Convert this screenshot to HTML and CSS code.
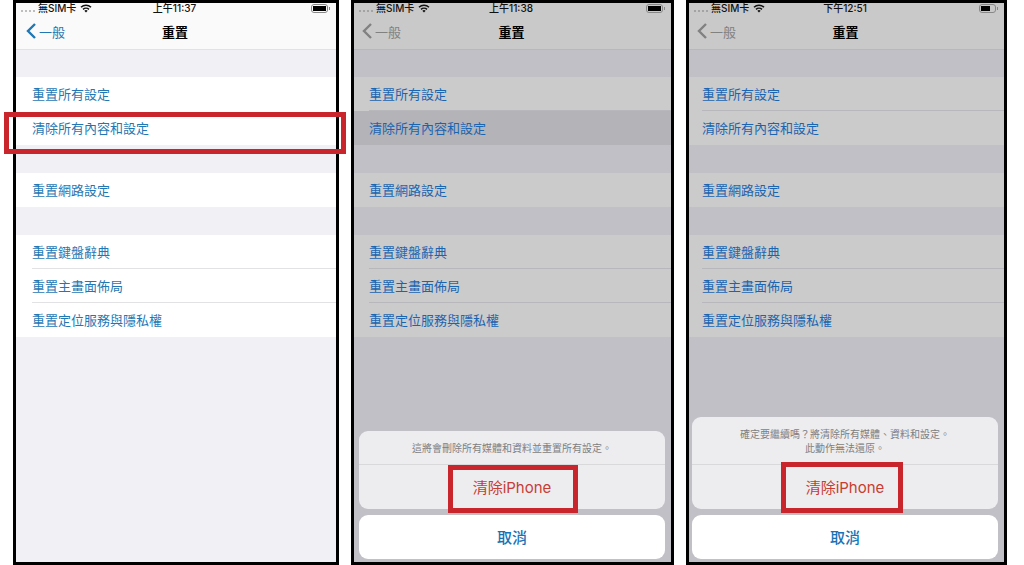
FILE: index.html
```
<!DOCTYPE html>
<html lang="zh-Hant">

<head>
  <meta charset="utf-8">
  <meta name="viewport" content="width=device-width, initial-scale=1">
  <title>重置</title>
  <link rel="stylesheet" href="styles.css">
</head>

<body>
  <!-- Shared icons -->
  <svg class="sprite" aria-hidden="true">
    <symbol id="wifi" viewBox="0 0 24 18">
      <path d="M2 6.5a14.5 14.5 0 0 1 20 0M6 10.8a8.8 8.8 0 0 1 12 0" fill="none" stroke="currentColor" stroke-width="3" />
      <path d="M8.7 13.6a4.8 4.8 0 0 1 6.6 0L12 17z" fill="currentColor" />
    </symbol>
    <symbol id="chevron" viewBox="0 0 10 16">
      <path d="M9 1L2 8l7 7" fill="none" stroke="currentColor" stroke-width="2.4" />
    </symbol>
  </svg>

  <main class="steps">
    <!-- Step 1 -->
    <section class="phone">
      <div class="status">
        <span class="carrier"><span class="signal"><i></i><i></i><i></i><i></i></span>無SIM卡<svg class="wifi"><use href="#wifi" /></svg></span>
        <span class="time">上午11:37</span>
        <span class="battery"><span class="level"></span></span>
      </div>
      <header class="nav">
        <button class="back"><svg class="chevron"><use href="#chevron" /></svg>一般</button>
        <h1>重置</h1>
      </header>
      <ul class="group">
        <li><button class="row">重置所有設定</button></li>
        <li class="marked"><button class="row">清除所有內容和設定</button></li>
      </ul>
      <ul class="group">
        <li><button class="row">重置網路設定</button></li>
      </ul>
      <ul class="group">
        <li><button class="row">重置鍵盤辭典</button></li>
        <li><button class="row">重置主畫面佈局</button></li>
        <li><button class="row">重置定位服務與隱私權</button></li>
      </ul>
    </section>

    <!-- Step 2 -->
    <section class="phone dimmed">
      <div class="status">
        <span class="carrier"><span class="signal"><i></i><i></i><i></i><i></i></span>無SIM卡<svg class="wifi"><use href="#wifi" /></svg></span>
        <span class="time">上午11:38</span>
        <span class="battery"><span class="level"></span></span>
      </div>
      <header class="nav">
        <button class="back"><svg class="chevron"><use href="#chevron" /></svg>一般</button>
        <h1>重置</h1>
      </header>
      <ul class="group">
        <li><button class="row">重置所有設定</button></li>
        <li><button class="row pressed">清除所有內容和設定</button></li>
      </ul>
      <ul class="group">
        <li><button class="row">重置網路設定</button></li>
      </ul>
      <ul class="group">
        <li><button class="row">重置鍵盤辭典</button></li>
        <li><button class="row">重置主畫面佈局</button></li>
        <li><button class="row">重置定位服務與隱私權</button></li>
      </ul>
      <div class="sheet">
        <div class="actions">
          <p>這將會刪除所有媒體和資料並重置所有設定。</p>
          <button class="erase"><span class="box">清除iPhone</span></button>
        </div>
        <button class="cancel">取消</button>
      </div>
    </section>

    <!-- Step 3 -->
    <section class="phone dimmed last">
      <div class="status">
        <span class="carrier"><span class="signal"><i></i><i></i><i></i><i></i></span>無SIM卡<svg class="wifi"><use href="#wifi" /></svg></span>
        <span class="time">下午12:51</span>
        <span class="battery"><span class="level low"></span></span>
      </div>
      <header class="nav">
        <button class="back"><svg class="chevron"><use href="#chevron" /></svg>一般</button>
        <h1>重置</h1>
      </header>
      <ul class="group">
        <li><button class="row">重置所有設定</button></li>
        <li><button class="row">清除所有內容和設定</button></li>
      </ul>
      <ul class="group">
        <li><button class="row">重置網路設定</button></li>
      </ul>
      <ul class="group">
        <li><button class="row">重置鍵盤辭典</button></li>
        <li><button class="row">重置主畫面佈局</button></li>
        <li><button class="row">重置定位服務與隱私權</button></li>
      </ul>
      <div class="sheet">
        <div class="actions">
          <p>確定要繼續嗎？將清除所有媒體、資料和設定。<br>此動作無法還原。</p>
          <button class="erase"><span class="box">清除iPhone</span></button>
        </div>
        <button class="cancel">取消</button>
      </div>
    </section>
  </main>
</body>

</html>
```
FILE: styles.css
```
*,
*::before,
*::after {
  box-sizing: border-box;
}

body {
  margin: 0;
  background: #fff;
  font-family: Inter, "Noto Sans CJK TC", sans-serif;
  font-size: 13px;
}

button {
  border: none;
  background: none;
  padding: 0;
  font: inherit;
  color: inherit;
  cursor: pointer;
}

.sprite {
  display: none;
}

.steps {
  display: grid;
  grid-template-columns: 326fr 323fr 321fr;
  gap: 12px;
  padding: 0 17px 0 13px;
  min-height: 100vh;
}

/* Phone screen */
.phone {
  --bar: #fafafa;
  --page: #f1f0f5;
  --cell: #fff;
  --line: #e2e2e5;
  --link: #1f78b4;
  --tint: #1f78b4;
  --inset: 16px;
  display: flex;
  flex-direction: column;
  border: 3px solid #000;
  background: var(--page);
}

.dimmed {
  --bar: #c9c9c9;
  --page: #c1c0c6;
  --cell: #cbcbcb;
  --line: #b7b7bc;
  --link: #1a65b2;
  --tint: #818181;
  --inset: 15px;
}

.last {
  --inset: 13px;
}

/* Status bar */
.status {
  display: grid;
  grid-template-columns: 1fr auto 1fr;
  align-items: center;
  height: 12px;
  padding: 0 8px 3px 5px;
  background: var(--bar);
  color: #111;
  font-size: 10px;
  font-weight: 500;
  line-height: 10px;
  white-space: nowrap;
}

.carrier {
  display: flex;
  align-items: center;
  gap: 3px;
}

.signal {
  display: flex;
  gap: 2px;
  padding-top: 6px;
}

.signal i {
  width: 2px;
  height: 2px;
  border-radius: 1px;
  background: #aaa;
}

.dimmed .signal i {
  background: #969696;
}

.wifi {
  width: 12px;
  height: 9px;
  margin-left: 1px;
}

.battery {
  position: relative;
  justify-self: end;
  width: 17px;
  height: 9px;
  padding: 1px;
  border: 1px solid #888;
  border-radius: 3px;
}

.battery::after {
  content: "";
  position: absolute;
  top: 2px;
  right: -3px;
  width: 1px;
  height: 3px;
  background: #888;
}

.level {
  display: block;
  width: 100%;
  height: 5px;
  background: #000;
}

.low {
  width: 70%;
}

/* Navigation bar */
.nav {
  display: grid;
  grid-template-columns: 1fr auto 1fr;
  align-items: center;
  height: 35px;
  padding: 0 12px 2px 10px;
  border-bottom: 1px solid var(--line);
  background: var(--bar);
}

.nav h1 {
  margin: 0;
  font-size: 13px;
  font-weight: 700;
}

.back {
  display: flex;
  align-items: center;
  gap: 3px;
  color: var(--tint);
}

.dimmed .back {
  margin-left: -2px;
}

.chevron {
  width: 10px;
  height: 16px;
}

/* Settings list */
.group {
  list-style: none;
  margin: 27px 0 0;
  padding: 0;
  background: var(--cell);
}

.group + .group {
  margin-top: 28px;
}

.group li {
  position: relative;
}

.row {
  display: block;
  width: 100%;
  height: 34px;
  padding: 0 var(--inset) 2px;
  text-align: left;
  color: var(--link);
}

.group li + li::before {
  content: "";
  position: absolute;
  top: -1px;
  left: var(--inset);
  right: 0;
  height: 1px;
  background: var(--line);
}

.group li.marked::before {
  display: none;
}

.pressed {
  background: #b4b3b8;
}

/* Red highlight boxes */
.marked::after {
  content: "";
  position: absolute;
  inset: 1px -10px -9px -12px;
  border: 5px solid #c9252d;
  z-index: 1;
}

.box::after {
  content: "";
  position: absolute;
  top: 0;
  bottom: -4px;
  left: 50%;
  width: 130px;
  margin-left: -64px;
  border: 5px solid #c9252d;
}

.last .box::after {
  top: -3px;
  width: 122px;
}

/* Action sheet */
.sheet {
  display: flex;
  flex-direction: column;
  gap: 6px;
  margin: auto 6px 3px 5px;
}

.last .sheet {
  margin-left: 3px;
}

.actions {
  border-radius: 9px;
  background: #ededef;
  text-align: center;
}

.actions p {
  margin: 0;
  padding: 10px 8px 9px;
  border-bottom: 1px solid #d9d9dc;
  color: #7e7e82;
  font-size: 10px;
  line-height: 14px;
}

.erase {
  position: relative;
  width: 100%;
  height: 44px;
  padding-bottom: 2px;
  color: #c83c32;
  font-size: 15px;
}

.cancel {
  height: 44px;
  padding-bottom: 2px;
  border-radius: 9px;
  background: #fff;
  color: #1773b5;
  font-size: 15px;
  font-weight: 500;
}
```
